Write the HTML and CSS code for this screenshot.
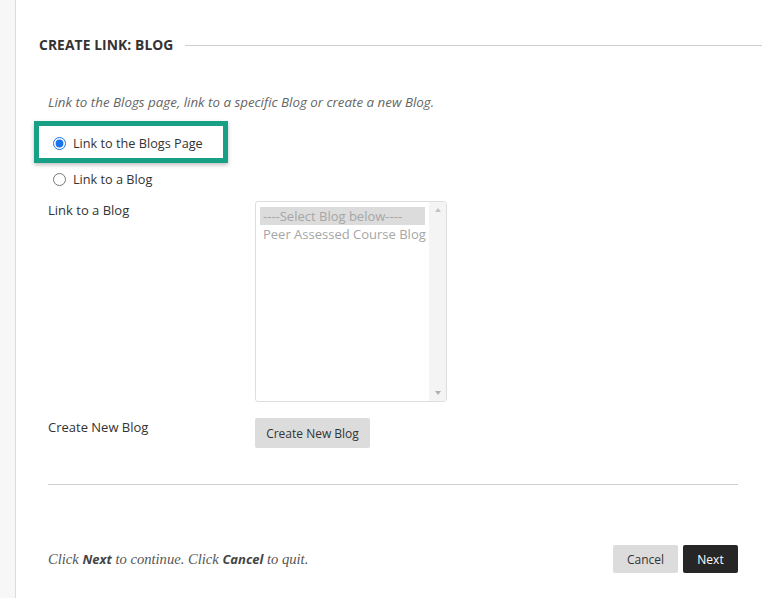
FILE: index.html
```html
<!DOCTYPE html>
<html>
<head>
<meta charset="utf-8">
<link rel="stylesheet" href="styles.css">
</head>
<body>
<div class="page">
  <div class="rail"></div>
  <main class="main">
    <div class="section-head">
      <h2 class="section-title">Create Link: Blog</h2>
      <span class="section-rule"></span>
    </div>
    <div class="content">
      <p class="intro">Link to the Blogs page, link to a specific Blog or create a new Blog.</p>
      <div class="radios">
        <label class="radio-row highlight"><input type="radio" name="lk" checked><span>Link to the Blogs Page</span></label>
        <label class="radio-row"><input type="radio" name="lk"><span>Link to a Blog</span></label>
      </div>
      <div class="form-row first">
        <div class="form-label">Link to a Blog</div>
        <div class="listbox">
          <div class="list-options">
            <div class="opt selected">----Select Blog below----</div>
            <div class="opt">Peer Assessed Course Blog</div>
          </div>
          <div class="scrollbar">
            <span class="arrow up"></span>
            <span class="arrow down"></span>
          </div>
        </div>
      </div>
      <div class="form-row">
        <div class="form-label">Create New Blog</div>
        <button class="btn btn-light btn-create">Create New Blog</button>
      </div>
      <hr class="divider">
      <div class="footer">
        <p class="footer-text">Click <b>Next</b> to continue. Click <b>Cancel</b> to quit.</p>
        <div class="footer-actions">
          <button class="btn btn-light btn-cancel">Cancel</button>
          <button class="btn btn-dark btn-next">Next</button>
        </div>
      </div>
    </div>
  </main>
</div>
</body>
</html>
```

FILE: styles.css
```css
html, body {
  margin: 0;
  padding: 0;
  background: #fff;
}
body {
  font-family: "Open Sans", "Liberation Sans", sans-serif;
  color: #333;
  font-size: 13px;
}
.page {
  display: flex;
  width: 782px;
  height: 598px;
  overflow: hidden;
}
.rail {
  width: 15px;
  flex: none;
  background: #f7f7f7;
  border-right: 1px solid #dcdcdc;
}
.main {
  flex: 1;
  padding: 36px 20px 0 23px;
}
.section-head {
  display: flex;
  align-items: center;
  height: 18px;
}
.section-title {
  margin: 0;
  font-size: 13.8px;
  font-weight: 700;
  text-transform: uppercase;
  line-height: 18px;
  color: #333;
  letter-spacing: 0.1px;
}
.section-rule {
  flex: 1;
  height: 1px;
  background: #cfcfcf;
  margin-left: 12px;
}
.content {
  padding: 0 24px 0 9px;
}
.intro {
  margin: 39px 0 0;
  font-style: italic;
  font-size: 13.35px;
  line-height: 18px;
  color: #666;
}
.radios {
  margin-top: 10px;
  display: flex;
  flex-direction: column;
  align-items: flex-start;
}
.radio-row {
  display: flex;
  align-items: center;
  line-height: 18px;
  font-size: 12.7px;
  color: #333;
}
.radio-row input {
  margin: 0 7px 0 5px;
  width: 13px;
  height: 13px;
  accent-color: #1a73e8;
}
.radio-row.highlight {
  border: 5px solid #18a087;
  margin-left: -14px;
  padding: 8px 20px 6px 9px;
  box-shadow: 0 2px 4px rgba(0,0,0,0.25);
  margin-bottom: 7px;
}
.form-row {
  display: flex;
  align-items: flex-start;
  margin-top: 16px;
}
.form-row.first {
  margin-top: 13px;
}
.form-label {
  width: 207px;
  flex: none;
  line-height: 18px;
  font-size: 13px;
  color: #333;
}
.listbox {
  width: 190px;
  height: 199px;
  border: 1px solid #dedede;
  border-radius: 3px;
  display: flex;
}
.list-options {
  flex: 1;
  padding: 5px 0 0 4px;
}
.opt {
  font-size: 13px;
  line-height: 18px;
  color: #a6a6a6;
  padding-left: 3px;
  white-space: nowrap;
}
.opt.selected {
  background: #dcdcdc;
  margin-right: 4px;
}
.scrollbar {
  width: 17px;
  background: #f4f4f4;
  display: flex;
  flex-direction: column;
  justify-content: space-between;
  align-items: center;
  padding: 6px 0;
}
.arrow {
  width: 0;
  height: 0;
  border-left: 3.5px solid transparent;
  border-right: 3.5px solid transparent;
}
.arrow.up {
  border-bottom: 4px solid #c4c4c4;
}
.arrow.down {
  border-top: 4px solid #b0b0b0;
}
.btn {
  font-family: "Open Sans", "Liberation Sans", sans-serif;
  font-size: 12px;
  border: none;
  border-radius: 2px;
  padding: 0;
  cursor: pointer;
}
.btn-light {
  background: #dcdcdc;
  color: #333;
}
.btn-dark {
  background: #262626;
  color: #fff;
}
.btn-create {
  width: 115px;
  height: 30px;
}
.divider {
  border: none;
  height: 1px;
  background: #cfcfcf;
  margin: 36px 0 0;
}
.footer {
  display: flex;
  align-items: center;
  justify-content: space-between;
  margin-top: 60px;
}
.footer-text {
  margin: 0;
  font-family: "Liberation Serif", "DejaVu Serif", serif;
  font-style: italic;
  font-size: 14.6px;
  color: #555;
}
.footer-text b {
  font-family: "Open Sans", "Liberation Sans", sans-serif;
  font-size: 13px;
  font-weight: 700;
  color: #444;
}
.footer-actions {
  display: flex;
  gap: 5px;
}
.btn-cancel {
  width: 65px;
  height: 28px;
}
.btn-next {
  width: 55px;
  height: 28px;
}
```
